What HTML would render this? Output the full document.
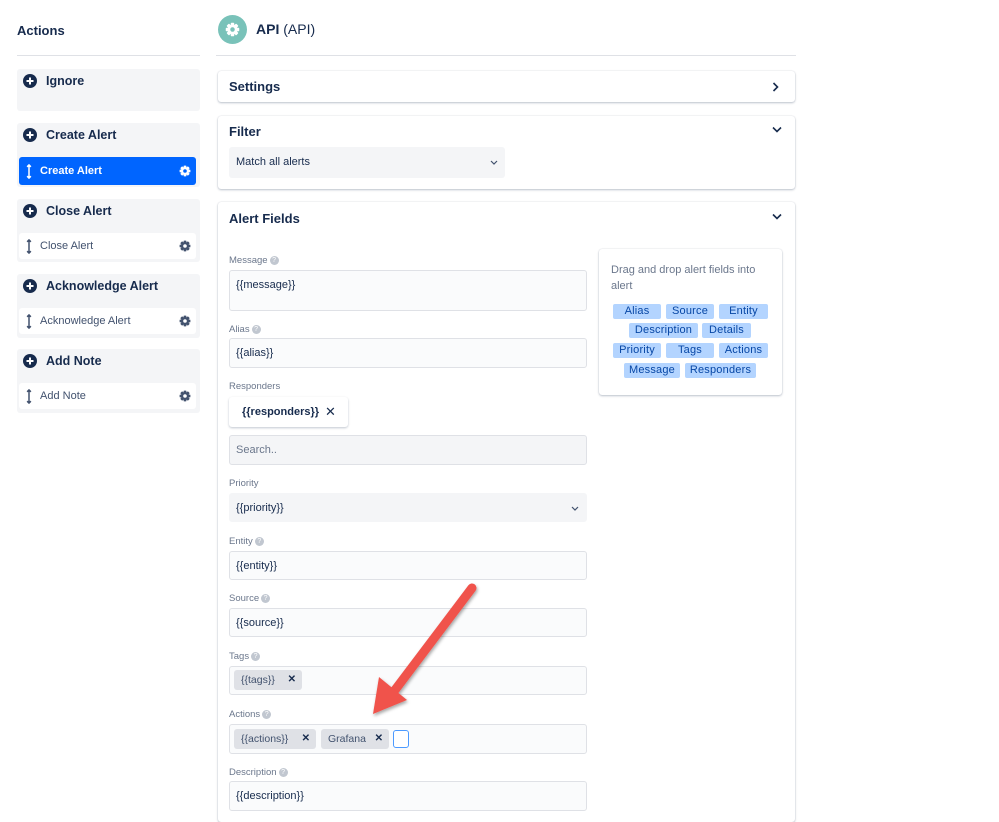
<!DOCTYPE html>
<html><head><meta charset="utf-8">
<style>
*{box-sizing:border-box;margin:0;padding:0}
body{width:999px;height:796px;overflow:hidden;background:#fff;font-family:"Liberation Sans",sans-serif;color:#172b4d;position:relative}
.a{position:absolute}
.grp{position:absolute;left:17px;width:183px;background:#f4f5f7;border-radius:3px}
.gh{position:absolute;left:6px;top:5px;font-size:12.5px;font-weight:bold;display:flex;align-items:center;gap:9px}
.item{position:absolute;left:2px;width:177px;height:27px;background:#fff;border-radius:3px;font-size:11px;color:#42526e;display:flex;align-items:center;padding-left:7px;gap:8px}
.item .g{position:absolute;right:5px;top:7px}
.card{position:absolute;left:218px;width:577px;background:#fff;border-radius:3px;box-shadow:0 1px 2px rgba(9,30,66,.25),0 0 1px rgba(9,30,66,.2)}
.ct{position:absolute;left:11px;font-size:13px;font-weight:bold}
.lbl{position:absolute;left:229px;font-size:9.5px;color:#6b778c;display:flex;align-items:center;gap:2px}
.q{width:9px;height:9px;border-radius:50%;background:#c1c7d0;color:#fff;font-size:7px;text-align:center;line-height:9px;display:inline-block}
.inp{position:absolute;left:229px;width:358px;background:#fafbfc;border:1px solid #dfe1e6;border-radius:3px;font-size:11px;padding:8px 6px;color:#172b4d}
.chip{position:absolute;background:#dfe1e6;border-radius:3px;font-size:10.5px;color:#42526e;height:20px;line-height:20px;padding-left:7px}
.chip b{position:absolute;right:6px;top:0;font-size:10px;color:#172b4d}
.tag{position:absolute;background:#b3d4ff;border-radius:2px;font-size:11px;color:#0747a6;height:15px;line-height:15px;text-align:center;letter-spacing:.2px}
</style></head><body>

<div class="a" style="left:17px;top:23px;font-size:13px;font-weight:bold">Actions</div>
<div class="a" style="left:17px;top:55px;width:183px;height:1px;background:#dfe1e6"></div>

<svg width="0" height="0" style="position:absolute">
<defs>
<mask id="gm"><rect width="12" height="12" fill="#fff"/><circle cx="6" cy="6" r="1.8" fill="#000"/></mask>
<symbol id="plus" viewBox="0 0 14 14"><circle cx="7" cy="7" r="7" fill="#172b4d"/><rect x="3.5" y="6" width="7" height="2" fill="#fff"/><rect x="6" y="3.5" width="2" height="7" fill="#fff"/></symbol>
<symbol id="gear" viewBox="0 0 12 12"><g mask="url(#gm)"><circle cx="6" cy="6" r="4"/><rect x="4.6" y="0.6" width="2.8" height="10.8" rx=".6"/><rect x="4.6" y="0.6" width="2.8" height="10.8" rx=".6" transform="rotate(45 6 6)"/><rect x="4.6" y="0.6" width="2.8" height="10.8" rx=".6" transform="rotate(90 6 6)"/><rect x="4.6" y="0.6" width="2.8" height="10.8" rx=".6" transform="rotate(135 6 6)"/></g></symbol>
<symbol id="drag" viewBox="0 0 6 16"><path d="M3 1v14M1 3l2-2 2 2M1 13l2 2 2-2" stroke="currentColor" stroke-width="1.6" fill="none"/></symbol>
</defs></svg>

<div class="grp" style="top:69px;height:42px"><div class="gh"><svg width="14" height="14"><use href="#plus"/></svg>Ignore</div></div>

<div class="grp" style="top:123px;height:64px"><div class="gh"><svg width="14" height="14"><use href="#plus"/></svg>Create Alert</div>
<div class="item" style="top:34px;height:28px;background:#0065ff;color:#fff;font-weight:bold"><svg width="6" height="15" style="color:#fff"><use href="#drag"/></svg>Create Alert<svg class="g" width="12" height="12" style="fill:#fff;top:8px"><use href="#gear"/></svg></div></div>

<div class="grp" style="top:199px;height:63px"><div class="gh"><svg width="14" height="14"><use href="#plus"/></svg>Close Alert</div>
<div class="item" style="top:34px;height:26px"><svg width="6" height="15" style="color:#42526e"><use href="#drag"/></svg>Close Alert<svg class="g" width="12" height="12" style="fill:#42526e"><use href="#gear"/></svg></div></div>

<div class="grp" style="top:274px;height:64px"><div class="gh"><svg width="14" height="14"><use href="#plus"/></svg>Acknowledge Alert</div>
<div class="item" style="top:34px;height:26px"><svg width="6" height="15" style="color:#42526e"><use href="#drag"/></svg>Acknowledge Alert<svg class="g" width="12" height="12" style="fill:#42526e"><use href="#gear"/></svg></div></div>

<div class="grp" style="top:349px;height:64px"><div class="gh"><svg width="14" height="14"><use href="#plus"/></svg>Add Note</div>
<div class="item" style="top:34px;height:26px"><svg width="6" height="15" style="color:#42526e"><use href="#drag"/></svg>Add Note<svg class="g" width="12" height="12" style="fill:#42526e"><use href="#gear"/></svg></div></div>

<!-- header -->
<div class="a" style="left:218px;top:15px;width:29px;height:29px;border-radius:50%;background:#79c2b9"></div>
<svg class="a" style="left:225px;top:22px;fill:#fff" width="15" height="15"><use href="#gear"/></svg>
<div class="a" style="left:256px;top:21px;font-size:14px"><b>API</b> (API)</div>
<div class="a" style="left:216px;top:55px;width:580px;height:1px;background:#dfe1e6"></div>

<div class="card" style="top:71px;height:31px"><div class="ct" style="top:8px">Settings</div>
<svg class="a" style="right:16px;top:11px" width="7" height="10"><path d="M1.5 1l4 4-4 4" stroke="#172b4d" stroke-width="1.6" fill="none"/></svg></div>

<div class="card" style="top:116px;height:73px"><div class="ct" style="top:8px">Filter</div>
<svg class="a" style="right:13px;top:10px" width="10" height="7"><path d="M1 1.5l4 4 4-4" stroke="#172b4d" stroke-width="1.6" fill="none"/></svg>
<div class="a" style="left:11px;top:31px;width:276px;height:31px;background:#f4f5f7;border-radius:3px;font-size:11px;padding:9px 7px;color:#172b4d">Match all alerts
<svg class="a" style="right:7px;top:13px" width="8" height="6"><path d="M1 1l3 3 3-3" stroke="#42526e" stroke-width="1.2" fill="none"/></svg></div></div>

<div class="card" style="top:202px;height:620px"><div class="ct" style="top:9px">Alert Fields</div>
<svg class="a" style="right:13px;top:11px" width="10" height="7"><path d="M1 1.5l4 4 4-4" stroke="#172b4d" stroke-width="1.6" fill="none"/></svg></div>

<div class="lbl" style="top:255px">Message<span class="q">?</span></div>
<div class="inp" style="top:270px;height:41px">{{message}}</div>
<div class="lbl" style="top:324px">Alias<span class="q">?</span></div>
<div class="inp" style="top:338px;height:30px">{{alias}}</div>
<div class="lbl" style="top:381px">Responders</div>
<div class="a" style="left:229px;top:397px;width:119px;height:30px;background:#fff;border-radius:3px;box-shadow:0 1px 2px rgba(9,30,66,.25);font-size:11px;font-weight:bold;padding:9px 0 0 13px">{{responders}}<span class="a" style="left:96px;top:7px;font-weight:normal;font-size:13px">✕</span></div>
<div class="inp" style="top:435px;height:30px;color:#6b778c;background:#f4f5f7">Search..</div>
<div class="lbl" style="top:478px">Priority</div>
<div class="inp" style="top:493px;height:29px;background:#f4f5f7;border-color:#f4f5f7">{{priority}}
<svg class="a" style="right:7px;top:12px" width="8" height="6"><path d="M1 1l3 3 3-3" stroke="#42526e" stroke-width="1.2" fill="none"/></svg></div>
<div class="lbl" style="top:536px">Entity<span class="q">?</span></div>
<div class="inp" style="top:551px;height:29px">{{entity}}</div>
<div class="lbl" style="top:593px">Source<span class="q">?</span></div>
<div class="inp" style="top:608px;height:29px">{{source}}</div>
<div class="lbl" style="top:651px">Tags<span class="q">?</span></div>
<div class="inp" style="top:666px;height:29px"></div>
<div class="chip" style="left:234px;top:670px;width:68px">{{tags}}<b>✕</b></div>
<div class="lbl" style="top:709px">Actions<span class="q">?</span></div>
<div class="inp" style="top:724px;height:30px"></div>
<div class="chip" style="left:234px;top:729px;width:82px">{{actions}}<b>✕</b></div>
<div class="chip" style="left:321px;top:729px;width:68px">Grafana<b>✕</b></div>
<div class="a" style="left:393px;top:730px;width:16px;height:18px;border:1.5px solid #4c9aff;border-radius:3px;background:#fff"></div>
<div class="lbl" style="top:767px">Description<span class="q">?</span></div>
<div class="inp" style="top:781px;height:30px">{{description}}</div>

<!-- drag panel -->
<div class="a" style="left:599px;top:249px;width:183px;height:146px;background:#fff;border-radius:3px;box-shadow:0 1px 2px rgba(9,30,66,.25),0 0 1px rgba(9,30,66,.2)"></div>
<div class="a" style="left:611px;top:262px;width:165px;font-size:11px;line-height:16px;color:#6b778c">Drag and drop alert fields into alert</div>
<div class="tag" style="left:613px;top:304px;width:48px">Alias</div>
<div class="tag" style="left:666px;top:304px;width:48px">Source</div>
<div class="tag" style="left:719px;top:304px;width:49px">Entity</div>
<div class="tag" style="left:629px;top:323px;width:69px">Description</div>
<div class="tag" style="left:702px;top:323px;width:49px">Details</div>
<div class="tag" style="left:613px;top:343px;width:48px">Priority</div>
<div class="tag" style="left:666px;top:343px;width:48px">Tags</div>
<div class="tag" style="left:719px;top:343px;width:49px">Actions</div>
<div class="tag" style="left:624px;top:363px;width:56px">Message</div>
<div class="tag" style="left:685px;top:363px;width:71px">Responders</div>

<!-- arrow -->
<svg class="a" style="left:0;top:0" width="999" height="796">
<defs><filter id="sh"><feDropShadow dx="1" dy="2" stdDeviation="1.5" flood-opacity=".35"/></filter></defs>
<g filter="url(#sh)"><line x1="472" y1="588" x2="392" y2="694" stroke="#f0524b" stroke-width="9" stroke-linecap="round"/>
<polygon points="373,714 379,677 407,700" fill="#f0524b"/></g>
</svg>
</body></html>
